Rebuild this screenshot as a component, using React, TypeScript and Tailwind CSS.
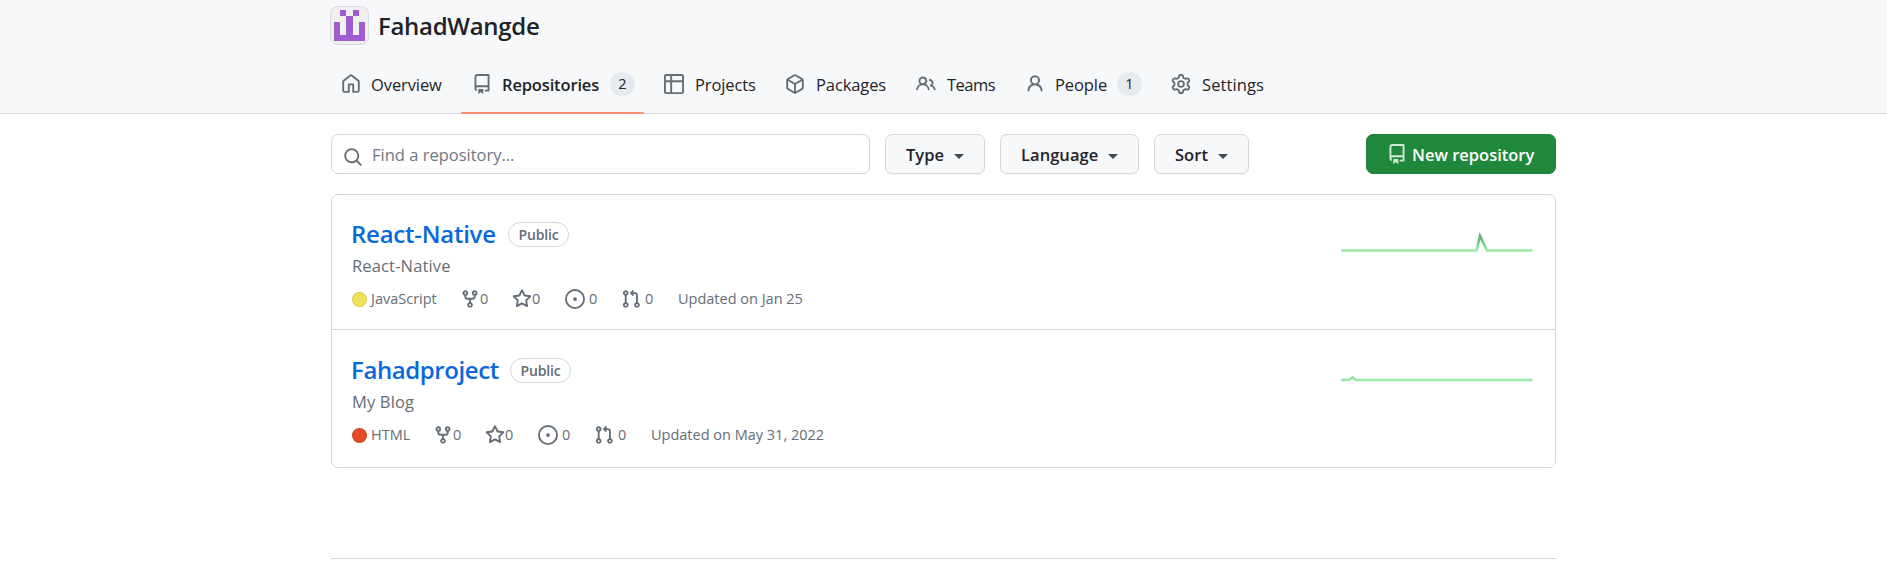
import React from "react";

const paths = {
  home: "M6.906.664a1.749 1.749 0 0 1 2.187 0l5.25 4.2c.415.332.657.835.657 1.367v7.019A1.75 1.75 0 0 1 13.25 15h-3.5a.75.75 0 0 1-.75-.75V9H7v5.25a.75.75 0 0 1-.75.75h-3.5A1.75 1.75 0 0 1 1 13.25V6.23c0-.531.242-1.034.657-1.366l5.25-4.2Zm1.25 1.171a.25.25 0 0 0-.312 0l-5.25 4.2a.25.25 0 0 0-.094.196v7.019c0 .138.112.25.25.25H5.5V8.25a.75.75 0 0 1 .75-.75h3.5a.75.75 0 0 1 .75.75v5.25h2.75a.25.25 0 0 0 .25-.25V6.23a.25.25 0 0 0-.094-.195Z",
  repo: "M2 2.5A2.5 2.5 0 0 1 4.5 0h8.75a.75.75 0 0 1 .75.75v12.5a.75.75 0 0 1-.75.75h-2.5a.75.75 0 0 1 0-1.5h1.75v-2h-8a1 1 0 0 0-.714 1.7.75.75 0 1 1-1.072 1.05A2.495 2.495 0 0 1 2 11.5Zm10.5-1h-8a1 1 0 0 0-1 1v6.708A2.486 2.486 0 0 1 4.5 9h8ZM5 12.25a.25.25 0 0 1 .25-.25h3.5a.25.25 0 0 1 .25.25v3.25a.25.25 0 0 1-.4.2l-1.45-1.087a.249.249 0 0 0-.3 0L5.4 15.7a.25.25 0 0 1-.4-.2Z",
  table: "M0 1.75C0 .784.784 0 1.75 0h12.5C15.216 0 16 .784 16 1.75v12.5A1.75 1.75 0 0 1 14.25 16H1.75A1.75 1.75 0 0 1 0 14.25ZM6.5 6.5v8h7.75a.25.25 0 0 0 .25-.25V6.5Zm8-1.5V1.75a.25.25 0 0 0-.25-.25H6.5V5Zm-13 1.5v7.75c0 .138.112.25.25.25H5v-8ZM5 5V1.5H1.75a.25.25 0 0 0-.25.25V5Z",
  package: "m8.878.392 5.25 3.045c.54.314.872.89.872 1.514v6.098a1.75 1.75 0 0 1-.872 1.514l-5.25 3.045a1.75 1.75 0 0 1-1.756 0l-5.25-3.045A1.75 1.75 0 0 1 1 11.049V4.951c0-.624.332-1.201.872-1.514L7.122.392a1.75 1.75 0 0 1 1.756 0ZM7.875 1.69l-4.63 2.685L8 7.133l4.755-2.758-4.63-2.685a.248.248 0 0 0-.25 0ZM2.5 5.677v5.372c0 .09.047.171.125.216l4.625 2.683V8.432Zm6.25 8.271 4.625-2.683a.25.25 0 0 0 .125-.216V5.677L8.75 8.432Z",
  people: "M2 5.5a3.5 3.5 0 1 1 5.898 2.549 5.508 5.508 0 0 1 3.034 4.084.75.75 0 1 1-1.482.235 4 4 0 0 0-7.9 0 .75.75 0 0 1-1.482-.236A5.507 5.507 0 0 1 3.102 8.05 3.493 3.493 0 0 1 2 5.5ZM11 4a3.001 3.001 0 0 1 2.22 5.018 5.01 5.01 0 0 1 2.56 3.012.749.749 0 0 1-.885.954.752.752 0 0 1-.549-.514 3.507 3.507 0 0 0-2.522-2.372.75.75 0 0 1-.574-.73v-.352a.75.75 0 0 1 .416-.672A1.5 1.5 0 0 0 11 5.5.75.75 0 0 1 11 4Zm-5.5-.5a2 2 0 1 0-.001 3.999A2 2 0 0 0 5.5 3.5Z",
  person: "M10.561 8.073a6.005 6.005 0 0 1 3.432 5.142.75.75 0 1 1-1.498.07 4.5 4.5 0 0 0-8.99 0 .75.75 0 0 1-1.498-.07 6.004 6.004 0 0 1 3.431-5.142 3.999 3.999 0 1 1 5.123 0ZM10.5 5a2.5 2.5 0 1 0-5 0 2.5 2.5 0 0 0 5 0Z",
  gear: "M8 0a8.2 8.2 0 0 1 .701.031C9.444.095 9.99.645 10.16 1.29l.288 1.107c.018.066.079.158.212.224.231.114.454.243.668.386.123.082.233.09.299.071l1.103-.303c.644-.176 1.392.021 1.82.63.27.385.506.792.704 1.218.315.675.111 1.422-.364 1.891l-.814.806c-.049.048-.098.147-.088.294.016.257.016.515 0 .772-.01.147.038.246.088.294l.814.806c.475.469.679 1.216.364 1.891a7.977 7.977 0 0 1-.704 1.217c-.428.61-1.176.807-1.82.63l-1.102-.302c-.067-.019-.177-.011-.3.071a5.909 5.909 0 0 1-.668.386c-.133.066-.194.158-.211.224l-.29 1.106c-.168.646-.715 1.196-1.458 1.26a8.006 8.006 0 0 1-1.402 0c-.743-.064-1.289-.614-1.458-1.26l-.289-1.106c-.018-.066-.079-.158-.212-.224a5.738 5.738 0 0 1-.668-.386c-.123-.082-.233-.09-.299-.071l-1.103.303c-.644.176-1.392-.021-1.82-.63a8.12 8.12 0 0 1-.704-1.218c-.315-.675-.111-1.422.363-1.891l.815-.806c.05-.048.098-.147.088-.294a6.214 6.214 0 0 1 0-.772c.01-.147-.038-.246-.088-.294l-.815-.806C.635 6.045.431 5.298.746 4.623a7.92 7.92 0 0 1 .704-1.217c.428-.61 1.176-.807 1.82-.63l1.102.302c.067.019.177.011.3-.071.214-.143.437-.272.668-.386.133-.066.194-.158.211-.224l.29-1.106C6.009.645 6.556.095 7.299.03 7.53.01 7.764 0 8 0Zm-.571 1.525c-.036.003-.108.036-.137.146l-.289 1.105c-.147.561-.549.967-.998 1.189-.173.086-.34.183-.5.29-.417.278-.97.423-1.529.27l-1.103-.303c-.109-.03-.175.016-.195.045-.22.312-.412.644-.573.99-.014.031-.021.11.059.19l.815.806c.411.406.562.957.53 1.456a4.709 4.709 0 0 0 0 .582c.032.499-.119 1.05-.53 1.456l-.815.806c-.081.08-.073.159-.059.19.162.346.353.677.573.989.02.03.085.076.195.046l1.102-.303c.56-.153 1.113-.008 1.53.27.161.107.328.204.501.29.447.222.85.629.997 1.189l.289 1.105c.029.109.101.143.137.146a6.6 6.6 0 0 0 1.142 0c.036-.003.108-.036.137-.146l.289-1.105c.147-.561.549-.967.998-1.189.173-.086.34-.183.5-.29.417-.278.97-.423 1.529-.27l1.103.303c.109.029.175-.016.195-.045.22-.313.411-.644.573-.99.014-.031.021-.11-.059-.19l-.815-.806c-.411-.406-.562-.957-.53-1.456a4.709 4.709 0 0 0 0-.582c-.032-.499.119-1.05.53-1.456l.815-.806c.081-.08.073-.159.059-.19a6.464 6.464 0 0 0-.573-.989c-.02-.03-.085-.076-.195-.046l-1.102.303c-.56.153-1.113.008-1.53-.27a4.44 4.44 0 0 0-.501-.29c-.447-.222-.85-.629-.997-1.189l-.289-1.105c-.029-.11-.101-.143-.137-.146a6.6 6.6 0 0 0-1.142 0ZM11 8a3 3 0 1 1-6 0 3 3 0 0 1 6 0ZM9.5 8a1.5 1.5 0 1 0-3.001.001A1.5 1.5 0 0 0 9.5 8Z",
  search: "M10.68 11.74a6 6 0 0 1-7.922-8.982 6 6 0 0 1 8.982 7.922l3.04 3.04a.749.749 0 0 1-.326 1.275.749.749 0 0 1-.734-.215ZM11.5 7a4.499 4.499 0 1 0-8.997 0A4.499 4.499 0 0 0 11.5 7Z",
  fork: "M5 5.372v.878c0 .414.336.75.75.75h4.5a.75.75 0 0 0 .75-.75v-.878a2.25 2.25 0 1 1 1.5 0v.878a2.25 2.25 0 0 1-2.25 2.25h-1.5v2.128a2.251 2.251 0 1 1-1.5 0V8.5h-1.5A2.25 2.25 0 0 1 3.5 6.25v-.878a2.25 2.25 0 1 1 1.5 0ZM5 3.25a.75.75 0 1 0-1.5 0 .75.75 0 0 0 1.5 0Zm6.75.75a.75.75 0 1 0 0-1.5.75.75 0 0 0 0 1.5Zm-3 8.75a.75.75 0 1 0-1.5 0 .75.75 0 0 0 1.5 0Z",
  star: "M8 .25a.75.75 0 0 1 .673.418l1.882 3.815 4.21.612a.75.75 0 0 1 .416 1.279l-3.046 2.97.719 4.192a.751.751 0 0 1-1.088.791L8 12.347l-3.766 1.98a.75.75 0 0 1-1.088-.79l.72-4.194L.818 6.374a.75.75 0 0 1 .416-1.28l4.21-.611L7.327.668A.75.75 0 0 1 8 .25Zm0 2.445L6.615 5.5a.75.75 0 0 1-.564.41l-3.097.45 2.24 2.184a.75.75 0 0 1 .216.664l-.528 3.084 2.769-1.456a.75.75 0 0 1 .698 0l2.77 1.456-.53-3.084a.75.75 0 0 1 .216-.664l2.24-2.183-3.096-.45a.75.75 0 0 1-.564-.41L8 2.694Z",
  issue: "M8 9.5a1.5 1.5 0 1 0 0-3 1.5 1.5 0 0 0 0 3Z M8 0a8 8 0 1 1 0 16A8 8 0 0 1 8 0ZM1.5 8a6.5 6.5 0 1 0 13 0 6.5 6.5 0 0 0-13 0Z",
  pull: "M1.5 3.25a2.25 2.25 0 1 1 3 2.122v5.256a2.251 2.251 0 1 1-1.5 0V5.372A2.25 2.25 0 0 1 1.5 3.25Zm5.677-.177L9.573.677A.25.25 0 0 1 10 .854V2.5h1A2.5 2.5 0 0 1 13.5 5v5.628a2.251 2.251 0 1 1-1.5 0V5a1 1 0 0 0-1-1h-1v1.646a.25.25 0 0 1-.427.177L7.177 3.427a.25.25 0 0 1 0-.354ZM3.75 2.5a.75.75 0 1 0 0 1.5.75.75 0 0 0 0-1.5Zm0 9.5a.75.75 0 1 0 0 1.5.75.75 0 0 0 0-1.5Zm8.25.75a.75.75 0 1 0 1.5 0 .75.75 0 0 0-1.5 0Z",
};

type IconName = keyof typeof paths;

function Icon({ name, className = "" }: { name: IconName; className?: string }) {
  return (
    <svg viewBox="0 0 16 16" fill="currentColor" aria-hidden="true" className={`size-5 shrink-0 ${className}`}>
      <path d={paths[name]} />
    </svg>
  );
}

type Tab = { icon: IconName; label: string; box: string; text: string; count?: number; active?: boolean };

const tabs: Tab[] = [
  { icon: "home", label: "Overview", box: "w-[131px]", text: "tracking-[-0.1px]" },
  { icon: "repo", label: "Repositories", box: "w-[192px]", text: "w-[108px] tracking-[-0.15px]", count: 2, active: true },
  { icon: "table", label: "Projects", box: "w-[121px]", text: "pl-px tracking-[-0.1px]" },
  { icon: "package", label: "Packages", box: "w-[131px]", text: "pl-px tracking-[-0.1px]" },
  { icon: "people", label: "Teams", box: "w-[109px]", text: "pl-px tracking-[-0.5px]" },
  { icon: "person", label: "People", box: "w-[146px]", text: "w-[62px] tracking-[-0.1px]", count: 1 },
  { icon: "gear", label: "Settings", box: "w-[110px]", text: "pl-px tracking-[0.1px]" },
];

function Avatar() {
  return (
    <div className="flex size-[39px] items-center justify-center rounded-[8px] border border-[#d8dbdf] bg-[#f0f0f0]">
      <svg viewBox="0 0 5 5" shapeRendering="crispEdges" className="size-[31px]" fill="#9f5bd2">
        <path d="M1 0h1v1h1v-1h1v1h-1v3h1v-2h1v3h-5v-3h1v2h1v-3h-1z" />
      </svg>
    </div>
  );
}

function Header() {
  return (
    <header className="flex h-[114px] justify-center border-b border-[#d0d7de] bg-[#f6f8fa]">
      <div className="w-[1227px]">
        <div className="flex h-[57px] items-start gap-[9px] pt-[6px]">
          <Avatar />
          <h1 className="pt-[4px] text-[24px] leading-[32px] font-semibold tracking-[-0.3px]">FahadWangde</h1>
        </div>
        <nav className="flex h-[57px] pl-[11px]">
          {tabs.map((tab) => (
            <div key={tab.label} className={`relative flex h-[57px] shrink-0 items-center pb-[3px] ${tab.box}`}>
              <Icon name={tab.icon} className="mr-[10px] text-[#656d76]" />
              <span className={`pt-[2px] text-[16.5px] leading-6 whitespace-nowrap ${tab.text} ${tab.active ? "font-semibold" : ""}`}>{tab.label}</span>
              {tab.count !== undefined && (
                <span className="flex h-6 w-[25px] items-center justify-center rounded-full bg-[#e7eaef] text-[14.5px] font-medium">{tab.count}</span>
              )}
              {tab.active && <span className="absolute bottom-0 -left-[11px] h-[2px] w-[183px] rounded-sm bg-[#fd8c73]" />}
            </div>
          ))}
        </nav>
      </div>
    </header>
  );
}

function FilterButton({ label, box }: { label: string; box: string }) {
  return (
    <button className={`flex h-10 items-center justify-between rounded-[7px] border border-[#d5d8da] bg-[#f6f8fa] pt-[2px] pr-[20px] pl-[20px] text-[16.5px] font-semibold tracking-[0.05px] shadow-[0_1px_0_rgba(31,35,40,0.04)] ${box}`}>
      {label}
      <svg viewBox="0 0 10 5" className="mt-[2px] h-[5px] w-[10px]" fill="#424a53">
        <path d="M0 0h10L5 5z" />
      </svg>
    </button>
  );
}

function Toolbar() {
  return (
    <div className="flex">
      <div className="mr-[15px] flex h-10 w-[539px] items-center rounded-[7px] border border-[#d0d7de] pl-[11px]">
        <Icon name="search" className="mt-[5px] mr-[9px] text-[#656d76]" />
        <span className="pt-[2px] text-[16.5px] text-[#6e7781]">Find a repository…</span>
      </div>
      <div className="flex gap-[15px]">
        <FilterButton label="Type" box="w-[100px]" />
        <FilterButton label="Language" box="w-[139px]" />
        <FilterButton label="Sort" box="w-[95px]" />
      </div>
      <button className="ml-auto flex h-10 w-[190px] items-center rounded-[7px] border border-[#1f7f3b] bg-[#1f883d] pl-[20px] text-[16.5px] font-semibold whitespace-nowrap text-white">
        <Icon name="repo" className="mr-[5px] opacity-80" />
        <span className="pt-[2px]">New repository</span>
      </button>
    </div>
  );
}

type Repo = {
  name: string;
  nameStyle: string;
  description: string;
  language: string;
  languageWidth: string;
  dot: string;
  updated: string;
};

const repos: Repo[] = [
  { name: "React-Native", nameStyle: "w-[157px] tracking-[-0.25px]", description: "React-Native", language: "JavaScript", languageWidth: "w-[89px]", dot: "bg-[#f1e05a]", updated: "Updated on Jan 25" },
  { name: "Fahadproject", nameStyle: "w-[159px] tracking-[-0.4px]", description: "My Blog", language: "HTML", languageWidth: "w-[62px]", dot: "bg-[#e34c26]", updated: "Updated on May 31, 2022" },
];

function RepoRow({ repo, children }: { repo: Repo; children: React.ReactNode }) {
  return (
    <li className="flex h-[137px] justify-between border-[#d0d7de] pt-px pr-[22px] pl-[20px] first:h-[135px] first:border-b first:pt-0">
      <div className="pt-[23px]">
        <div className="-ml-px flex items-center">
          <h3 className={`text-[24px] leading-[32px] font-semibold whitespace-nowrap text-[#0969da] ${repo.nameStyle}`}>{repo.name}</h3>
          <span className="flex h-[25px] w-[61px] items-center justify-center rounded-full border border-[#d0d7de] text-[14px] font-semibold tracking-[-0.2px] text-[#656d76]">Public</span>
        </div>
        <p className="mt-[2px] text-[16.5px] leading-[28px] tracking-[0.15px] text-[#656d76]">{repo.description}</p>
        <div className="mt-[9px] flex h-5 items-center text-[14.5px] whitespace-nowrap text-[#656d76]">
          <span className={`mr-[4px] size-[15px] rounded-full border border-black/10 ${repo.dot}`} />
          <span className={repo.languageWidth}>{repo.language}</span>
          <Icon name="fork" />
          <span className="w-[32px]">0</span>
          <Icon name="star" />
          <span className="w-[33px]">0</span>
          <Icon name="issue" className="mr-[4px]" />
          <span className="w-[32px]">0</span>
          <Icon name="pull" className="mr-[4px]" />
          <span className="w-[33px]">0</span>
          <span>{repo.updated}</span>
        </div>
      </div>
      {children}
    </li>
  );
}

function Sparkline({ id, points, base }: { id: string; points: string; base: number }) {
  return (
    <svg className="mt-[30px] h-[38px] w-[192px]" viewBox="0 0 192 38" fill="none">
      <defs>
        <linearGradient id={id} gradientUnits="userSpaceOnUse" x1="0" y1={base} x2="0" y2={base - 18}>
          <stop offset="0" stopColor="#9be9a8" />
          <stop offset="0.35" stopColor="#70d488" />
          <stop offset="0.65" stopColor="#67b77f" />
          <stop offset="1" stopColor="#55946a" />
        </linearGradient>
      </defs>
      <polyline points={points} stroke={`url(#${id})`} strokeWidth="2.5" />
    </svg>
  );
}

export default function App() {
  return (
    <div className="min-h-[572px] w-full bg-white font-['Open_Sans','Noto_Sans',sans-serif] text-[#1f2328]">
      <Header />
      <main className="mx-auto w-[1225px] pt-5">
        <Toolbar />
        <ul className="mt-5 h-[274px] rounded-[7px] border border-[#d0d7de]">
          <RepoRow repo={repos[0]}>
            <Sparkline id="activity-react-native" base={25.5} points="0,25.5 135.5,25.5 139,11 146,25.5 191.5,25.5" />
          </RepoRow>
          <RepoRow repo={repos[1]}>
            <Sparkline id="activity-fahadproject" base={19} points="0,19 8,19 11.5,16.5 15,19 191.5,19" />
          </RepoRow>
        </ul>
        <div className="mt-[90px] border-t border-[#d0d7de]" />
      </main>
    </div>
  );
}
